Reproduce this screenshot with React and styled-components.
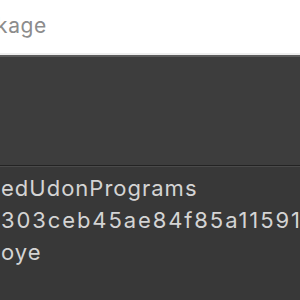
import React from "react";
import styled, { createGlobalStyle } from "styled-components";

const Global = createGlobalStyle`
  html, body {
    margin: 0;
    padding: 0;
    background: #383838;
    overflow: hidden;
  }
  #root {
    width: 300px;
    height: 300px;
  }
`;

const Window = styled.div`
  width: 300px;
  height: 300px;
  display: flex;
  flex-direction: column;
  overflow: hidden;
  font-family: Inter, "Noto Sans", sans-serif;
`;

const SearchBar = styled.div`
  height: 53px;
  background: #ffffff;
  border-bottom: 2px solid #efefef;
  display: flex;
  align-items: center;
  overflow: hidden;
`;

const Placeholder = styled.span`
  margin-left: -4px;
  margin-top: -3px;
  font-size: 21px;
  letter-spacing: 0.6px;
  color: #8c8c8c;
  white-space: nowrap;
`;

const Toolbar = styled.div`
  height: 108px;
  background: #3d3d3d;
  border-top: 2px solid #5c5c5c;
  border-bottom: 1px solid #232323;
`;

const Details = styled.div`
  flex: 1;
  background: #383838;
  border-top: 1px solid #4a4a4a;
  padding-top: 5px;
  display: flex;
  flex-direction: column;
`;

const Line = styled.div`
  height: 32px;
  line-height: 32px;
  padding-left: 1px;
  font-size: 22px;
  letter-spacing: ${(p) => p.$spacing || "1px"};
  color: #d4d4d4;
  white-space: nowrap;
  overflow: hidden;
`;

export default function App() {
  return (
    <Window>
      <Global />
      <SearchBar>
        <Placeholder>kage</Placeholder>
      </SearchBar>
      <Toolbar />
      <Details>
        <Line>edUdonPrograms</Line>
        <Line $spacing="1.9px">303ceb45ae84f85a11591</Line>
        <Line>oye</Line>
      </Details>
    </Window>
  );
}
